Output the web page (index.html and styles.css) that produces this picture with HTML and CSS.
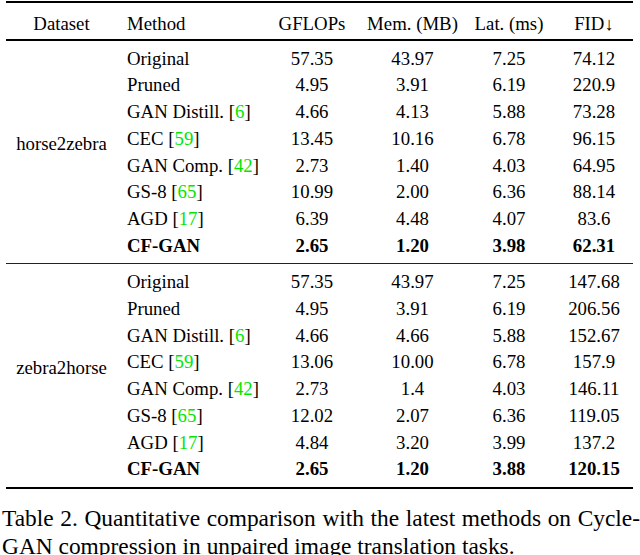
FILE: index.html
```html
<!DOCTYPE html>
<html lang="en">
<head>
<meta charset="utf-8">
<title>Table 2</title>
<link rel="stylesheet" href="styles.css">
</head>
<body>
<table class="results">
  <colgroup>
    <col class="c-data"><col class="c-method"><col class="c-gf"><col class="c-mem"><col class="c-lat"><col class="c-fid">
  </colgroup>
  <thead>
    <tr>
      <th>Dataset</th><th class="method">Method</th><th>GFLOPs</th><th>Mem. (MB)</th><th>Lat. (ms)</th><th>FID↓</th>
    </tr>
  </thead>
  <tbody>
    <tr class="first"><td class="dataset" rowspan="8">horse2zebra</td><td class="method">Original</td><td>57.35</td><td>43.97</td><td>7.25</td><td>74.12</td></tr>
    <tr><td class="method">Pruned</td><td>4.95</td><td>3.91</td><td>6.19</td><td>220.9</td></tr>
    <tr><td class="method">GAN Distill. [<span class="cite">6</span>]</td><td>4.66</td><td>4.13</td><td>5.88</td><td>73.28</td></tr>
    <tr><td class="method">CEC [<span class="cite">59</span>]</td><td>13.45</td><td>10.16</td><td>6.78</td><td>96.15</td></tr>
    <tr><td class="method">GAN Comp. [<span class="cite">42</span>]</td><td>2.73</td><td>1.40</td><td>4.03</td><td>64.95</td></tr>
    <tr><td class="method">GS-8 [<span class="cite">65</span>]</td><td>10.99</td><td>2.00</td><td>6.36</td><td>88.14</td></tr>
    <tr><td class="method">AGD [<span class="cite">17</span>]</td><td>6.39</td><td>4.48</td><td>4.07</td><td>83.6</td></tr>
    <tr class="last best"><td class="method">CF-GAN</td><td>2.65</td><td>1.20</td><td>3.98</td><td>62.31</td></tr>
  </tbody>
  <tbody class="second">
    <tr class="first"><td class="dataset" rowspan="8">zebra2horse</td><td class="method">Original</td><td>57.35</td><td>43.97</td><td>7.25</td><td>147.68</td></tr>
    <tr><td class="method">Pruned</td><td>4.95</td><td>3.91</td><td>6.19</td><td>206.56</td></tr>
    <tr><td class="method">GAN Distill. [<span class="cite">6</span>]</td><td>4.66</td><td>4.66</td><td>5.88</td><td>152.67</td></tr>
    <tr><td class="method">CEC [<span class="cite">59</span>]</td><td>13.06</td><td>10.00</td><td>6.78</td><td>157.9</td></tr>
    <tr><td class="method">GAN Comp. [<span class="cite">42</span>]</td><td>2.73</td><td>1.4</td><td>4.03</td><td>146.11</td></tr>
    <tr><td class="method">GS-8 [<span class="cite">65</span>]</td><td>12.02</td><td>2.07</td><td>6.36</td><td>119.05</td></tr>
    <tr><td class="method">AGD [<span class="cite">17</span>]</td><td>4.84</td><td>3.20</td><td>3.99</td><td>137.2</td></tr>
    <tr class="last best"><td class="method">CF-GAN</td><td>2.65</td><td>1.20</td><td>3.88</td><td>120.15</td></tr>
  </tbody>
</table>
<p class="caption">Table 2. Quantitative comparison with the latest methods on Cycle-GAN compression in unpaired image translation tasks.</p>
</body>
</html>
```

FILE: styles.css
```css
html, body {
  margin: 0;
  padding: 0;
  background: #fff;
  color: #000;
  font-family: "Liberation Serif", "Times New Roman", serif;
}
body {
  width: 640px;
  height: 555px;
  overflow: hidden;
}
.results {
  margin: 1px 0 0 6px;
  width: 627px;
  table-layout: fixed;
  border-collapse: collapse;
  border-top: 2px solid #000;
  border-bottom: 2px solid #000;
  font-size: 18.8px;
  line-height: 26.7px;
}
.c-data { width: 111px; }
.c-method { width: 145px; }
.c-gf { width: 100px; }
.c-mem { width: 101px; }
.c-lat { width: 92px; }
.c-fid { width: 78px; }

.results th, .results td {
  padding: 0;
  text-align: center;
  white-space: nowrap;
  font-weight: normal;
  vertical-align: baseline;
}
.results thead tr {
  border-bottom: 2px solid #000;
}
.results th {
  padding-top: 8px;
  padding-bottom: 1px;
}
.results .method {
  text-align: left;
  padding-left: 10px;
}
.results tr.first td {
  padding-top: 5px;
}
.results tr.last td {
  padding-bottom: 4px;
}
.results td.dataset {
  vertical-align: middle;
  padding-top: 5px;
  padding-bottom: 20px;
}
.results tbody.second {
  border-top: 1px solid #222;
}
.best td {
  font-weight: bold;
}
.cite {
  color: #00e600;
}
.caption {
  margin: 15px 0 0 2px;
  width: 638px;
  font-size: 23.4px;
  line-height: 28px;
  text-align: justify;
}
```
